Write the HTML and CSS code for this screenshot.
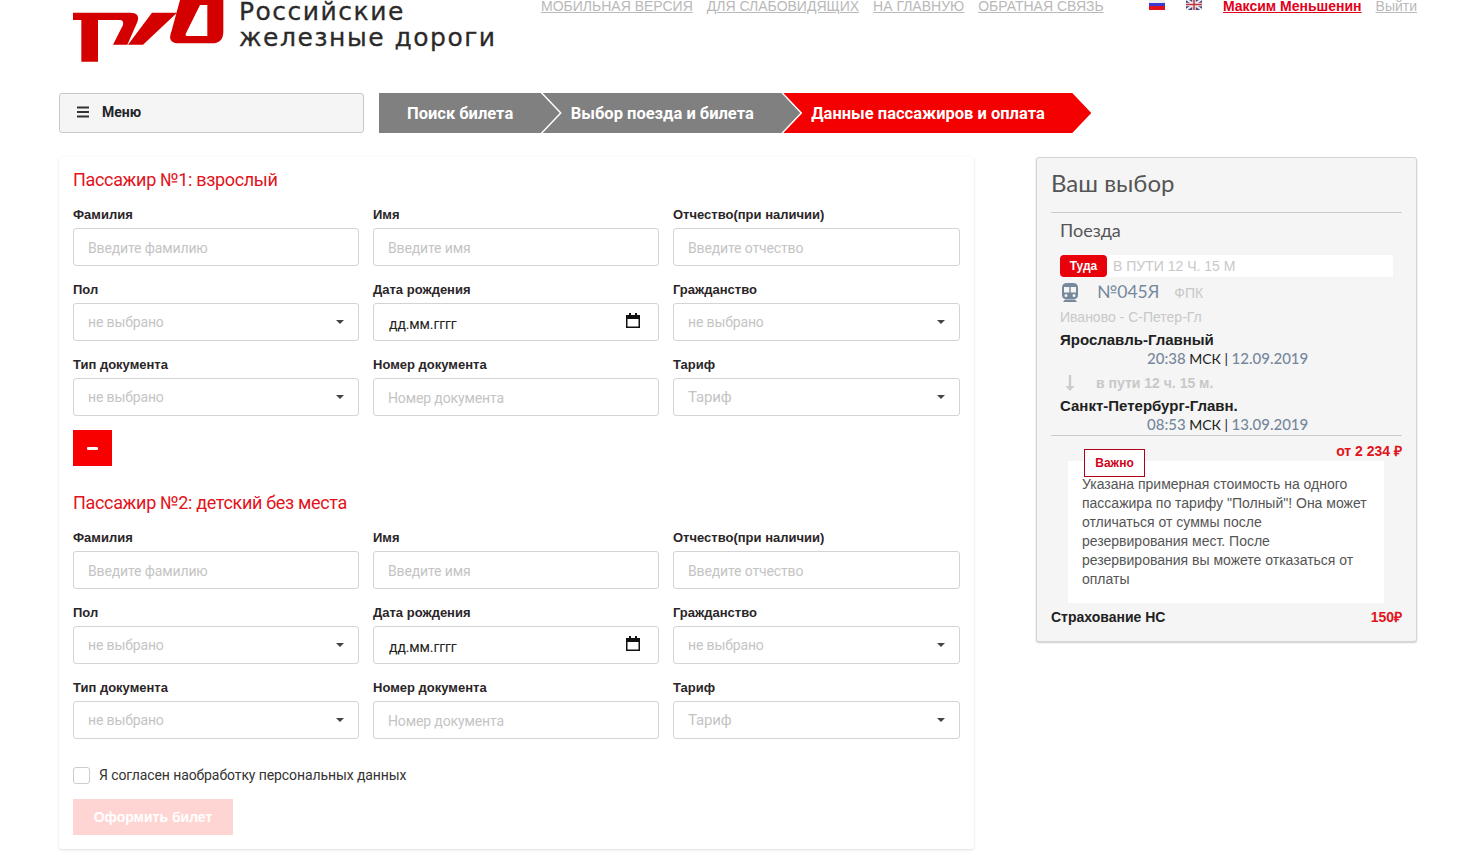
FILE: index.html
```html
<!DOCTYPE html>
<html lang="ru">
<head>
  <meta charset="UTF-8">
  <title>Данные пассажиров и оплата</title>
  <link rel="stylesheet" href="styles.css">
</head>
<body>
  <div class="page">
    <header class="top">
      <div class="brand">
        <svg class="logo" viewBox="0 0 480 198" width="160" height="66">
          <path d="M15 38H185Q218 38 208 66L178 134H135L165 75Q168 60 155 60H90V185H40V60H15Z"/>
          <path d="M252 38H327L225 134H180Z"/>
          <path fill-rule="evenodd" d="M336 0H466V95Q466 130 430 130H335Q296 130 310 95ZM396 15H418V108H358Q350 108 354 100Z"/>
        </svg>
        <div class="brand-name">
          <span class="brand-line">Российские</span>
          <span class="brand-line">железные дороги</span>
        </div>
      </div>
      <nav class="top-links">
        <a href="#">МОБИЛЬНАЯ ВЕРСИЯ</a>
        <a href="#">ДЛЯ СЛАБОВИДЯЩИХ</a>
        <a href="#">НА ГЛАВНУЮ</a>
        <a href="#">ОБРАТНАЯ СВЯЗЬ</a>
      </nav>
      <div class="top-user">
        <svg class="flag" viewBox="0 0 16 11" width="16" height="11">
          <rect width="16" height="4" fill="#eee"/>
          <rect y="4" width="16" height="3" fill="#3a3ad0"/>
          <rect y="7" width="16" height="4" fill="#e0101c"/>
        </svg>
        <svg class="flag flag-uk" viewBox="0 0 16 11" width="16" height="11">
          <rect width="16" height="11" fill="#44447e"/>
          <path d="M0 0L16 11M16 0L0 11" stroke="#eee" stroke-width="2"/>
          <path d="M8 0V11M0 5.500H16" stroke="#eee" stroke-width="3.500"/>
          <path d="M8 0V11M0 5.500H16" stroke="#c8303c" stroke-width="1.500"/>
        </svg>
        <a class="user-name" href="#">Максим Меньшенин</a>
        <a class="logout" href="#">Выйти</a>
      </div>
    </header>

    <div class="bar">
      <button class="menu-btn" type="button">
        <svg viewBox="0 0 14 12" width="14" height="12"><path d="M1 1.500H13M1 6H13M1 10.500H13" stroke="#333" stroke-width="1.800"/></svg>
        Меню
      </button>
      <ol class="steps">
        <li class="step step-first">Поиск билета</li>
        <li class="step">Выбор поезда и билета</li>
        <li class="step step-active">Данные пассажиров и оплата</li>
      </ol>
    </div>

    <div class="content">
      <main class="card">
        <h4 class="pass-title">Пассажир №1: взрослый</h4>
        <div class="fields">
          <div class="field"><label>Фамилия</label><input class="control" placeholder="Введите фамилию"></div>
          <div class="field"><label>Имя</label><input class="control" placeholder="Введите имя"></div>
          <div class="field"><label>Отчество(при наличии)</label><input class="control" placeholder="Введите отчество"></div>
          <div class="field"><label>Пол</label><div class="control select">не выбрано</div></div>
          <div class="field"><label>Дата рождения</label>
            <div class="control date">дд.мм.гггг
              <svg viewBox="0 0 14 15" width="14" height="15"><path d="M3 0H5V2H9V0H11V2H14V15H0V2H3ZM1.500 6V13.500H12.500V6Z" fill="#111" fill-rule="evenodd"/></svg>
            </div>
          </div>
          <div class="field"><label>Гражданство</label><div class="control select">не выбрано</div></div>
          <div class="field"><label>Тип документа</label><div class="control select">не выбрано</div></div>
          <div class="field"><label>Номер документа</label><input class="control" placeholder="Номер документа"></div>
          <div class="field"><label>Тариф</label><div class="control select select-tariff">Тариф</div></div>
        </div>
        <button class="remove-btn" type="button"><span class="minus"></span></button>

        <h4 class="pass-title pass-title-next">Пассажир №2: детский без места</h4>
        <div class="fields">
          <div class="field"><label>Фамилия</label><input class="control" placeholder="Введите фамилию"></div>
          <div class="field"><label>Имя</label><input class="control" placeholder="Введите имя"></div>
          <div class="field"><label>Отчество(при наличии)</label><input class="control" placeholder="Введите отчество"></div>
          <div class="field"><label>Пол</label><div class="control select">не выбрано</div></div>
          <div class="field"><label>Дата рождения</label>
            <div class="control date">дд.мм.гггг
              <svg viewBox="0 0 14 15" width="14" height="15"><path d="M3 0H5V2H9V0H11V2H14V15H0V2H3ZM1.500 6V13.500H12.500V6Z" fill="#111" fill-rule="evenodd"/></svg>
            </div>
          </div>
          <div class="field"><label>Гражданство</label><div class="control select">не выбрано</div></div>
          <div class="field"><label>Тип документа</label><div class="control select">не выбрано</div></div>
          <div class="field"><label>Номер документа</label><input class="control" placeholder="Номер документа"></div>
          <div class="field"><label>Тариф</label><div class="control select select-tariff">Тариф</div></div>
        </div>

        <div class="agree"><span class="check"></span>Я согласен наобработку персональных данных</div>
        <button class="submit-btn" type="button">Оформить билет</button>
      </main>

      <aside class="summary">
        <h3 class="summary-title">Ваш выбор</h3>
        <div class="trip">
          <h4 class="trip-title">Поезда</h4>
          <div class="dir-row"><span class="dir-badge">Туда</span>В ПУТИ 12 Ч. 15 М</div>
          <div class="train-row">
            <svg class="train-icon" viewBox="0 0 16 19" width="16" height="19">
              <path fill="#76889c" fill-rule="evenodd" d="M5 0H11Q16 0 16 5V12Q16 16 12 16H4Q0 16 0 12V5Q0 0 5 0ZM2 4V9.500H7.300V4ZM8.700 4V9.500H14V4ZM4 11A1.500 1.500 0 1 0 4 14A1.500 1.500 0 1 0 4 11ZM12 11A1.500 1.500 0 1 0 12 14A1.500 1.500 0 1 0 12 11Z"/>
              <path fill="#76889c" d="M3 16.500H13L15 19H1Z"/>
            </svg>
            <span class="train-num">№045Я</span>
            <span class="train-co">ФПК</span>
          </div>
          <div class="route">Иваново - С-Петер-Гл</div>
          <div class="station">Ярославль-Главный</div>
          <div class="when"><b>20:38</b> МСК | <b>12.09.2019</b></div>
          <div class="way">
            <svg viewBox="0 0 10 16" width="10" height="16"><path d="M3.800 0H6.200V11H9.500L5 16L.5 11H3.800Z" fill="#ccc"/></svg>
            в пути 12 ч. 15 м.
          </div>
          <div class="station">Санкт-Петербург-Главн.</div>
          <div class="when"><b>08:53</b> МСК | <b>13.09.2019</b></div>
        </div>
        <div class="price-row">от 2 234 ₽</div>
        <div class="notice">
          <span class="notice-tag">Важно</span>
          <p>Указана примерная стоимость на одного пассажира по тарифу "Полный"! Она может отличаться от суммы после резервирования мест. После резервирования вы можете отказаться от оплаты</p>
        </div>
        <div class="insurance"><span>Страхование НС</span><span class="insurance-price">150₽</span></div>
      </aside>
    </div>
  </div>
</body>
</html>
```

FILE: styles.css
```css
html, body {
  margin: 0;
  height: 855px;
  overflow: hidden;
  background: #fff;
}
body {
  font-family: "Liberation Sans", Arial, sans-serif;
  font-size: 14px;
  color: #212529;
}
.page {
  padding: 0 44px 0 59px;
}

.top {
  display: flex;
  height: 93px;
  overflow: hidden;
}
.brand {
  display: flex;
  width: 482px;
}
.logo {
  display: block;
  margin-left: 9px;
  fill: #d40000;
  flex: none;
}
.brand-name {
  margin-left: 11px;
  font-family: "DejaVu Sans", sans-serif;
  font-size: 25px;
  letter-spacing: 1.5px;
  color: #2b2a29;
  white-space: nowrap;
  -webkit-text-stroke: 0.3px #2b2a29;
}
.brand-line {
  display: block;
  line-height: 24px;
}
.brand-line + .brand-line {
  line-height: 28px;
}
.top-links {
  display: flex;
  gap: 14px;
  height: 14px;
}
.top-links a,
.logout {
  color: #b9b9b9;
  text-decoration: underline;
  line-height: 12px;
  white-space: nowrap;
}
.top-user {
  display: flex;
  margin-left: auto;
  height: 14px;
}
.flag-uk {
  margin-left: 21px;
}
.flag {
  margin-top: -1px;
}
.user-name {
  margin-left: 21px;
  color: #e2001a;
  font-weight: bold;
  line-height: 12px;
  white-space: nowrap;
}
.logout {
  margin-left: 14px;
}

.bar {
  display: flex;
  gap: 15px;
}
.menu-btn {
  display: flex;
  align-items: center;
  gap: 12px;
  width: 305px;
  height: 40px;
  padding: 0 16px 2px;
  background: #f5f5f5;
  border: 1px solid #c8c8c8;
  border-radius: 3px;
  font: bold 14px Roboto, sans-serif;
  color: #212529;
}
.steps {
  display: flex;
  margin: 0;
  padding: 0;
  list-style: none;
}
.step {
  height: 40px;
  margin-left: -17px;
  padding: 0 46.500px 0 28px;
  background: #808080;
  color: #fff;
  font: bold 16.500px/41px Roboto, sans-serif;
  white-space: nowrap;
  clip-path: polygon(0 0, calc(100% - 19px) 0, 100% 50%, calc(100% - 19px) 100%, 0 100%, 19px 50%);
}
.step-first {
  margin-left: 0;
  clip-path: polygon(0 0, calc(100% - 19px) 0, 100% 50%, calc(100% - 19px) 100%, 0 100%);
}
.step-active {
  background: #f50000;
}

.content {
  display: flex;
  justify-content: space-between;
  align-items: flex-start;
  margin-top: 24px;
}
.card {
  width: 915px;
  height: 692px;
  box-sizing: border-box;
  padding: 0 14px;
  background: #fff;
  border-radius: 3px;
  box-shadow: 0 1px 3px rgba(0, 0, 0, 0.13);
}
.pass-title {
  margin: 0;
  padding-top: 12px;
  height: 38px;
  font: normal 18px/22px Roboto, sans-serif;
  letter-spacing: -0.33px;
  color: #e2131b;
}
.pass-title-next {
  margin-top: 14px;
}
.fields {
  display: grid;
  grid-template-columns: 286px 286px 287px;
  column-gap: 14px;
  row-gap: 16px;
}
.field label {
  display: block;
  height: 21px;
  font-size: 13px;
  font-weight: bold;
  line-height: 15px;
  color: #2a2527;
}
.control {
  display: block;
  width: 100%;
  height: 38px;
  box-sizing: border-box;
  padding: 0 14px;
  border: 1px solid #d4d4d4;
  border-radius: 3px;
  background: #fff;
  font: 14px/36px Roboto, sans-serif;
  letter-spacing: -0.13px;
  color: #c4c4c4;
}
input.control {
  padding-top: 2px;
}
.control::placeholder {
  color: #c4c4c4;
}
.select {
  position: relative;
}
.select::after {
  content: "";
  position: absolute;
  right: 14px;
  top: 16px;
  border: 4px solid transparent;
  border-top-color: #444;
  border-bottom: 0;
}
.select-tariff {
  font-size: 15px;
}
.date {
  display: flex;
  justify-content: space-between;
  align-items: center;
  padding: 4px 18px 0 15px;
  color: #222;
  line-height: 32px;
}
.date svg {
  margin-top: -8px;
}
.remove-btn {
  display: flex;
  align-items: center;
  justify-content: center;
  width: 39px;
  height: 36px;
  margin-top: 14px;
  padding: 0;
  background: #f90000;
  border: 0;
}
.minus {
  width: 11px;
  height: 3px;
  background: #fff;
  border-radius: 1px;
}
.agree {
  display: flex;
  align-items: center;
  gap: 9px;
  margin-top: 28px;
  color: #333;
  line-height: 17px;
  letter-spacing: -0.1px;
  font-family: Roboto, sans-serif;
}
.check {
  width: 17px;
  height: 17px;
  box-sizing: border-box;
  border: 1px solid #ccc;
  border-radius: 3px;
}
.submit-btn {
  display: block;
  width: 160px;
  height: 36px;
  margin-top: 15px;
  background: #ffd5d3;
  border: 0;
  color: #fff;
  font: bold 14px "Liberation Sans", sans-serif;
}

.summary {
  width: 381px;
  height: 485px;
  box-sizing: border-box;
  padding: 0 14px;
  background: #f5f5f5;
  border: 1px solid #d4d4d4;
  border-radius: 3px;
  box-shadow: 0 1px 2px rgba(0, 0, 0, 0.2);
}
.summary-title {
  height: 55px;
  margin: 0;
  box-sizing: border-box;
  padding-top: 11px;
  border-bottom: 1px solid #ccc;
  font: normal 24px/28px Lato, Roboto, sans-serif;
  color: #555;
}
.trip {
  height: 223px;
  box-sizing: border-box;
  padding: 7px 9px 0;
  border-bottom: 1px solid #ccc;
}
.trip-title {
  height: 35px;
  margin: 0;
  font: normal 18px/21px Lato, Roboto, sans-serif;
  color: #555;
}
.dir-row {
  display: flex;
  align-items: center;
  gap: 6px;
  height: 22px;
  background: #fff;
  color: #c8c8c8;
}
.dir-badge {
  width: 47px;
  line-height: 22px;
  text-align: center;
  background: #e8000b;
  border-radius: 4px;
  color: #fff;
  font-size: 12px;
  font-weight: bold;
}
.train-row {
  display: flex;
  align-items: center;
  height: 30px;
}
.train-icon {
  margin-left: 2px;
}
.train-num {
  margin: -1px 0 0 19px;
  font: 17.500px Lato, Roboto, sans-serif;
  color: #76889c;
}
.train-co {
  margin: 2px 0 0 15px;
  color: #c8c8c8;
}
.route {
  height: 24px;
  line-height: 20px;
  color: #c8c8c8;
}
.station {
  font-size: 15px;
  font-weight: bold;
  line-height: 18px;
  color: #212121;
}
.when {
  height: 19px;
  padding-left: 87px;
  line-height: 18px;
  color: #212121;
  font-family: Lato, Roboto, sans-serif;
}
.when b {
  font-size: 15px;
  font-weight: 500;
  color: #76889c;
}
.way {
  display: flex;
  align-items: center;
  gap: 21px;
  height: 29px;
  padding-left: 5px;
  color: #c8c8c8;
  font-size: 14px;
  font-weight: bold;
}
.price-row {
  height: 25px;
  text-align: right;
  line-height: 30px;
  color: #e2131b;
  font-weight: bold;
}
.notice {
  position: relative;
  margin: 0 18px 0 17px;
  height: 142px;
  box-sizing: border-box;
  padding: 14px 14px 0;
  background: #fff;
  color: #555;
}
.notice p {
  margin: 0;
  line-height: 19px;
}
.notice-tag {
  position: absolute;
  left: 16px;
  top: -12px;
  width: 61px;
  height: 28px;
  box-sizing: border-box;
  border: 1px solid #b00016;
  background: #fff;
  text-align: center;
  color: #d0021b;
  font-size: 12px;
  font-weight: bold;
  line-height: 26px;
}
.insurance {
  display: flex;
  justify-content: space-between;
  margin-top: 6px;
  line-height: 16px;
  font-weight: bold;
  color: #212121;
}
.insurance-price {
  color: #e2131b;
}
```
